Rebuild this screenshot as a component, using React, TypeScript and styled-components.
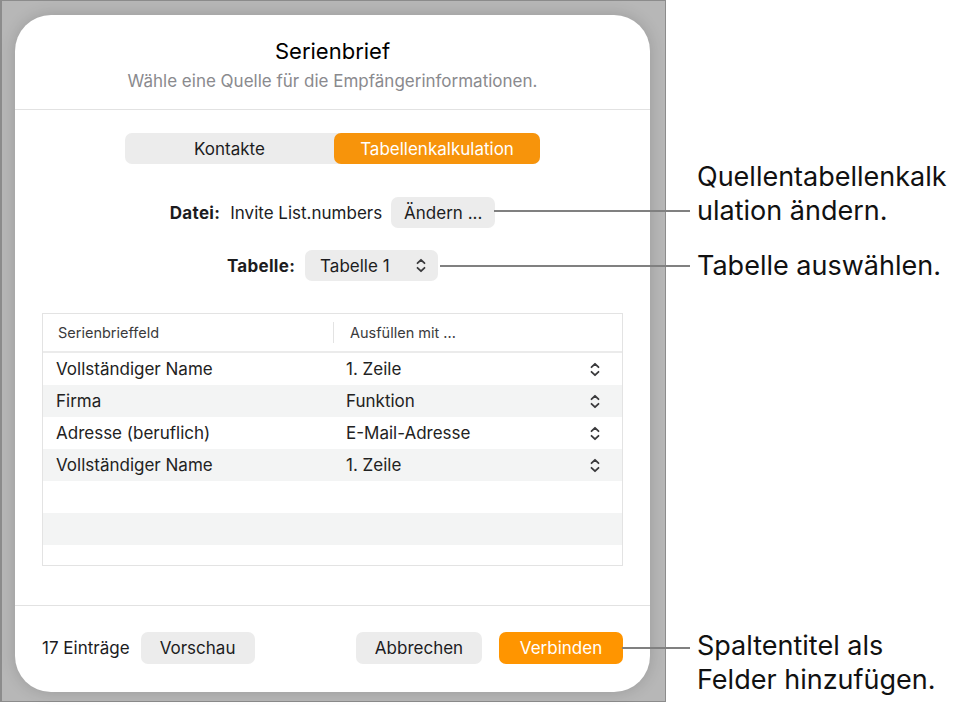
import styled, { createGlobalStyle } from "styled-components";

const GlobalStyle = createGlobalStyle`
  html, body {
    margin: 0;
    padding: 0;
    background: #ffffff;
  }
  body {
    font-family: Inter, "Noto Sans", "Liberation Sans", sans-serif;
    color: #1c1c1e;
  }
`;

const Page = styled.div`
  position: relative;
  width: 958px;
  height: 705px;
  overflow: hidden;
`;

const Frame = styled.div`
  box-sizing: border-box;
  width: 666px;
  height: 702px;
  background: #b7b7b7;
  border: 1px solid #8c8c8c;
  border-left-width: 2px;
  padding: 14px 15px 9px 13px;
  display: flex;
`;

const Dialog = styled.div`
  flex: 1;
  background: #ffffff;
  border-radius: 36px;
  box-shadow: 0 0 16px rgba(0, 0, 0, 0.16);
  display: flex;
  flex-direction: column;
  overflow: hidden;
`;

const Header = styled.div`
  display: flex;
  flex-direction: column;
  align-items: center;
  padding: 23px 0 17px;
  border-bottom: 1px solid #e2e2e2;
`;

const Title = styled.div`
  font-size: 22px;
  line-height: 26px;
  color: #000;
`;

const Subtitle = styled.div`
  margin-top: 7px;
  font-size: 17px;
  line-height: 21px;
  color: #8a8a8e;
`;

const Body = styled.div`
  flex: 1;
  display: flex;
  flex-direction: column;
  align-items: center;
  padding-top: 23px;
`;

const Segmented = styled.div`
  display: grid;
  grid-template-columns: 209px 206px;
  height: 31px;
  background: #ececec;
  border-radius: 7px;
`;

const Segment = styled.div<{ $active?: boolean }>`
  display: flex;
  align-items: center;
  justify-content: center;
  font-size: 17px;
  border-radius: 7px;
  color: ${(p) => (p.$active ? "#ffffff" : "#1c1c1e")};
  background: ${(p) => (p.$active ? "#f7940b" : "transparent")};
`;

const FieldRow = styled.div<{ $top: number }>`
  display: flex;
  align-items: center;
  margin-top: ${(p) => p.$top}px;
  font-size: 17px;
  white-space: nowrap;
`;

const Label = styled.span`
  font-weight: 700;
  margin-right: 10px;
  letter-spacing: 0.3px;
`;

const Value = styled.span`
  margin-right: 9px;
`;

const GreyButton = styled.div<{ $width?: number }>`
  box-sizing: border-box;
  height: 31px;
  display: flex;
  align-items: center;
  justify-content: center;
  padding: 0 8px;
  width: ${(p) => (p.$width ? `${p.$width}px` : "auto")};
  background: #ececec;
  border-radius: 7px;
  font-size: 17px;
  color: #1c1c1e;
  white-space: nowrap;
`;

const PopupButton = styled(GreyButton)`
  justify-content: space-between;
  padding: 0 12px 0 15px;
`;

const Table = styled.div`
  box-sizing: border-box;
  margin-top: 32px;
  width: 581px;
  height: 253px;
  border: 1px solid #e3e3e3;
  overflow: hidden;
`;

const HeaderRow = styled.div`
  display: grid;
  grid-template-columns: 290px 1fr;
  height: 37px;
  border-bottom: 2px solid #ebebeb;
  align-items: center;
  font-size: 14.5px;
  color: #3a3a3c;
`;

const HeaderCell = styled.div<{ $divider?: boolean }>`
  height: 21px;
  display: flex;
  align-items: center;
  padding-left: ${(p) => (p.$divider ? "16px" : "15px")};
  border-left: ${(p) => (p.$divider ? "1px solid #e3e3e3" : "none")};
`;

const Row = styled.div<{ $striped: boolean }>`
  display: grid;
  grid-template-columns: 290px 1fr 40px;
  height: 32px;
  align-items: center;
  font-size: 17px;
  color: #222;
  background: ${(p) => (p.$striped ? "#f3f4f4" : "#ffffff")};
`;

const Cell = styled.div`
  padding-left: 13px;
`;

const IconCell = styled.div`
  display: flex;
  align-items: center;
  justify-content: flex-start;
  padding-left: 8px;
`;

const Footer = styled.div`
  display: flex;
  align-items: center;
  height: 83px;
  padding: 0 27px 3px 27px;
  border-top: 1px solid #e2e2e2;
  font-size: 17px;
`;

const Count = styled.span`
  margin-right: 11px;
  color: #1c1c1e;
`;

const Spacer = styled.div`
  flex: 1;
`;

const FooterButton = styled.div<{ $primary?: boolean; $width: number }>`
  box-sizing: border-box;
  width: ${(p) => p.$width}px;
  height: 32px;
  display: flex;
  align-items: center;
  justify-content: center;
  border-radius: 7px;
  font-size: 17px;
  background: ${(p) => (p.$primary ? "#ff9500" : "#ececec")};
  color: ${(p) => (p.$primary ? "#ffffff" : "#1c1c1e")};
  & + & {
    margin-left: 17px;
  }
`;

const CalloutLine = styled.div<{ $x: number; $y: number; $w: number }>`
  position: absolute;
  left: ${(p) => p.$x}px;
  top: ${(p) => p.$y}px;
  width: ${(p) => p.$w}px;
  height: 2px;
  background: #808080;
`;

const CalloutText = styled.div<{ $y: number }>`
  position: absolute;
  left: 697px;
  top: ${(p) => p.$y}px;
  font-size: 27px;
  line-height: 34px;
  color: #111;
  white-space: nowrap;
`;

const UpDown = () => (
  <svg width="10" height="15" viewBox="0 0 10 15" fill="none">
    <path
      d="M1.5 5.2 L5 1.8 L8.5 5.2 M1.5 9.8 L5 13.2 L8.5 9.8"
      stroke="#3a3a3c"
      strokeWidth="1.8"
      strokeLinecap="round"
      strokeLinejoin="round"
    />
  </svg>
);

const rows = [
  ["Vollständiger Name", "1. Zeile"],
  ["Firma", "Funktion"],
  ["Adresse (beruflich)", "E-Mail-Adresse"],
  ["Vollständiger Name", "1. Zeile"],
  ["", ""],
  ["", ""],
  ["", ""],
];

export default function App() {
  return (
    <>
      <GlobalStyle />
      <Page>
        <Frame>
          <Dialog>
            <Header>
              <Title>Serienbrief</Title>
              <Subtitle>Wähle eine Quelle für die Empfängerinformationen.</Subtitle>
            </Header>
            <Body>
              <Segmented>
                <Segment>Kontakte</Segment>
                <Segment $active>Tabellenkalkulation</Segment>
              </Segmented>
              <FieldRow $top={33}>
                <Label>Datei:</Label>
                <Value>Invite List.numbers</Value>
                <GreyButton $width={104}>Ändern ...</GreyButton>
              </FieldRow>
              <FieldRow $top={22}>
                <Label>Tabelle:</Label>
                <PopupButton $width={133}>
                  <span>Tabelle 1</span>
                  <UpDown />
                </PopupButton>
              </FieldRow>
              <Table>
                <HeaderRow>
                  <HeaderCell>Serienbrieffeld</HeaderCell>
                  <HeaderCell $divider>Ausfüllen mit ...</HeaderCell>
                </HeaderRow>
                {rows.map(([field, value], i) => (
                  <Row key={i} $striped={i % 2 === 1}>
                    <Cell>{field}</Cell>
                    <Cell>{value}</Cell>
                    <IconCell>{field && <UpDown />}</IconCell>
                  </Row>
                ))}
              </Table>
            </Body>
            <Footer>
              <Count>17 Einträge</Count>
              <FooterButton $width={114}>Vorschau</FooterButton>
              <Spacer />
              <FooterButton $width={126}>Abbrechen</FooterButton>
              <FooterButton $width={124} $primary>
                Verbinden
              </FooterButton>
            </Footer>
          </Dialog>
        </Frame>

        <CalloutLine $x={494} $y={210} $w={196} />
        <CalloutText $y={160}>
          Quellentabellenkalk
          <br />
          ulation ändern.
        </CalloutText>
        <CalloutLine $x={440} $y={265} $w={250} />
        <CalloutText $y={249}>Tabelle auswählen.</CalloutText>
        <CalloutLine $x={622} $y={647} $w={68} />
        <CalloutText $y={629}>
          Spaltentitel als
          <br />
          Felder hinzufügen.
        </CalloutText>
      </Page>
    </>
  );
}
